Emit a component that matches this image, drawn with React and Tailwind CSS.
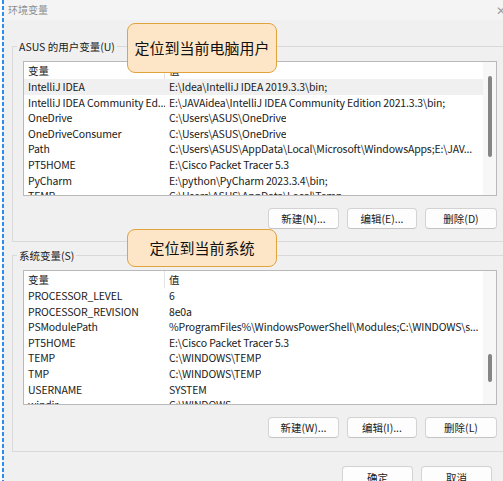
import React from "react";

const userRows = [
  ["IntelliJ IDEA", "E:\\Idea\\IntelliJ IDEA 2019.3.3\\bin;"],
  ["IntelliJ IDEA Community Ed...", "E:\\JAVAidea\\IntelliJ IDEA Community Edition 2021.3.3\\bin;"],
  ["OneDrive", "C:\\Users\\ASUS\\OneDrive"],
  ["OneDriveConsumer", "C:\\Users\\ASUS\\OneDrive"],
  ["Path", "C:\\Users\\ASUS\\AppData\\Local\\Microsoft\\WindowsApps;E:\\JAV..."],
  ["PT5HOME", "E:\\Cisco Packet Tracer 5.3"],
  ["PyCharm", "E:\\python\\PyCharm 2023.3.4\\bin;"],
  ["TEMP", "C:\\Users\\ASUS\\AppData\\Local\\Temp"],
];

const sysRows = [
  ["PROCESSOR_LEVEL", "6"],
  ["PROCESSOR_REVISION", "8e0a"],
  ["PSModulePath", "%ProgramFiles%\\WindowsPowerShell\\Modules;C:\\WINDOWS\\s..."],
  ["PT5HOME", "E:\\Cisco Packet Tracer 5.3"],
  ["TEMP", "C:\\WINDOWS\\TEMP"],
  ["TMP", "C:\\WINDOWS\\TEMP"],
  ["USERNAME", "SYSTEM"],
  ["windir", "C:\\WINDOWS"],
];

function List({ rows, selected, thumbTop, thumbH }) {
  return (
    <div className="w-[474px] h-[135px] border border-[#b9b9b9] bg-white flex overflow-hidden">
      <div className="flex-1 flex flex-col overflow-hidden">
        <div className="h-[17px] shrink-0 flex items-center leading-[15px]">
          <div className="w-[141px] h-full pl-[4px] flex items-center border-r border-[#e3e3e3]">变量</div>
          <div className="pl-[4px]">值</div>
        </div>
        {rows.map(([k, v], i) => (
          <div
            key={i}
            className={
              "h-[15.55px] shrink-0 flex items-center whitespace-nowrap leading-[15px] tracking-[-0.15px] " +
              (i === selected ? "bg-[#f0f0f0]" : "")
            }
          >
            <div className="w-[141px] shrink-0 pl-[4px] overflow-hidden">{k}</div>
            <div className="pl-[4px] overflow-hidden">{v}</div>
          </div>
        ))}
      </div>
      <div className="w-[13px] shrink-0 bg-[#f7f7f7] flex flex-col items-center">
        <div className={thumbTop}></div>
        <div className={"w-[4px] rounded-[2px] bg-[#858585] " + thumbH}></div>
      </div>
    </div>
  );
}

function Btn({ w, children }) {
  return (
    <div
      className={
        "h-[21px] flex items-center justify-center bg-[#fdfdfd] border border-[#d3d3d3] border-b-[#c4c4c4] rounded-[4px] leading-[15px] " +
        w
      }
    >
      {children}
    </div>
  );
}

export default function App() {
  return (
    <div className="relative w-[503px] h-[481px] overflow-hidden bg-[#f0f0f0] text-[10.5px] leading-none text-[#1a1a1a] font-['Noto_Sans_CJK_SC','Noto_Sans',sans-serif]">
      {/* title bar */}
      <div className="h-[20px] bg-[#f4f4f4] flex items-center pl-[8px] text-[#8e8e8e] text-[10px] leading-[14px]">
        <span>环境变量</span>
        <span className="ml-auto mr-[-3px] text-[#a0a0a0] text-[12px]">✕</span>
      </div>

      <div className="pl-[12px]">
        {/* user group */}
        <div className="relative mt-[26px] w-[500px] border border-[#d9d9d9] pt-[14px] pl-[10px] pb-[12px]">
          <div className="absolute top-[-8px] left-[4px] px-[2px] bg-[#f0f0f0] leading-[15px]">ASUS 的用户变量(U)</div>
          <List rows={userRows} selected={0} thumbTop="h-[14px]" thumbH="h-[81px]" />
          <div className="w-[474px] flex justify-end gap-[8px] mt-[12px]">
            <Btn w="w-[71px]">新建(N)...</Btn>
            <Btn w="w-[70px]">编辑(E)...</Btn>
            <Btn w="w-[72px]">删除(D)</Btn>
          </div>
        </div>

        {/* system group */}
        <div className="relative mt-[13px] w-[500px] border border-[#d9d9d9] pt-[14px] pl-[10px] pb-[13px]">
          <div className="absolute top-[-8px] left-[4px] px-[2px] bg-[#f0f0f0] leading-[15px]">系统变量(S)</div>
          <List rows={sysRows} selected={-1} thumbTop="h-[83px]" thumbH="h-[28px]" />
          <div className="w-[474px] flex justify-end gap-[8px] mt-[12px]">
            <Btn w="w-[71px]">新建(W)...</Btn>
            <Btn w="w-[70px]">编辑(I)...</Btn>
            <Btn w="w-[72px]">删除(L)</Btn>
          </div>
        </div>
      </div>

      <div className="flex justify-end gap-[8px] pr-[11px] mt-[14px]">
        <Btn w="w-[71px] h-[22px]">确定</Btn>
        <Btn w="w-[71px] h-[22px]">取消</Btn>
      </div>

      {/* dashed guide line */}
      <svg className="absolute left-0 top-0" width="5" height="481">
        <rect x="0" y="0" width="2" height="481" fill="#ffffff" />
        <line x1="3" y1="0" x2="3" y2="481" stroke="#2b8ef0" strokeWidth="2" strokeDasharray="4 2" />
      </svg>

      {/* callouts */}
      <div className="absolute left-[127px] top-[23px] w-[150px] h-[50px] rounded-[8px] border-[1.5px] border-[#e2a33c] bg-[#fde6c8] flex items-center justify-center text-[15px] leading-[20px] text-[#111]">
        定位到当前电脑用户
      </div>
      <div className="absolute left-[127px] top-[229px] w-[150px] h-[38px] rounded-[8px] border-[1.5px] border-[#e2a33c] bg-[#fde6c8] flex items-center justify-center text-[15px] leading-[20px] text-[#111]">
        定位到当前系统
      </div>
    </div>
  );
}
